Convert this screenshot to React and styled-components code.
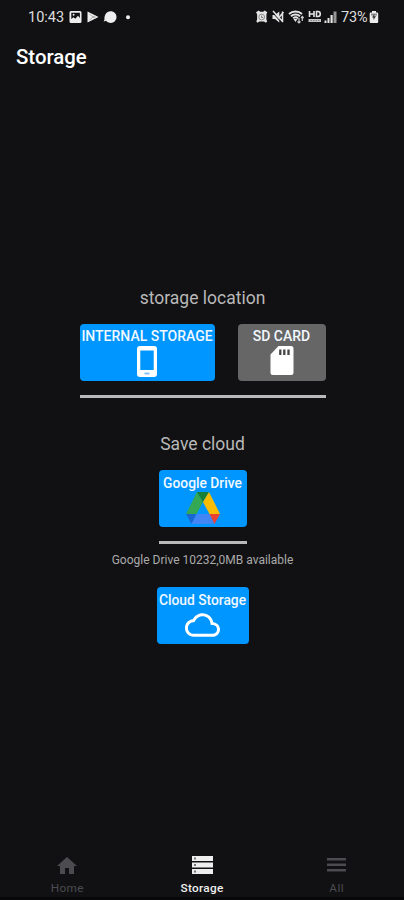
import React from 'react';
import styled, { createGlobalStyle } from 'styled-components';

const blue = '#0096ff';

//status bar drawings
const StatusLeftIcons = () => (
  <svg width="72" height="16" viewBox="0 0 72 16" fill="#eee">
    <path fillRule="evenodd" d="M3 2h9a1.500 1.500 0 0 1 1.500 1.500v9a1.500 1.500 0 0 1-1.500 1.500h-9a1.500 1.500 0 0 1-1.500-1.500v-9A1.500 1.500 0 0 1 3 2zM3.300 3.800v6.200l2.200-1.700 1.800 1.400 2.700-3 1.900 2.300V3.800z" />
    <circle cx="5.600" cy="5.800" r="1" />
    <path d="M19.500 2.500l11 5.500-11 5.500z" />
    <path d="M21.500 5l3.500 3-3.500 3M25 8l3-1.500M25 8l3 1.500" fill="none" stroke="#99999b" strokeWidth=".8" />
    <path d="M36.500 10.500c-.5-5 2.500-8.300 6.200-8.300 3.300 0 5.800 2.600 5.800 5.800s-2.500 5.900-5.800 5.900c-2 0-3.500-.8-4.600-2.100l-2.500.6z" />
    <circle cx="60" cy="8.300" r="2" />
  </svg>
);

const StatusRightIcons = () => (
  <svg width="82" height="16" viewBox="0 0 82 16" fill="#e4e4e4">
    <path d="M1 3.200l2.700-1.700 1.500 1.300h3l1.500-1.300 2.600 1.700-.9 2v5.300l.8 1.900-1.400 1.400-1.700-1.200H4.300l-1.600 1.200-1.400-1.400.8-1.900V5.200z" />
    <circle cx="6.700" cy="8" r="2.900" fill="none" stroke="#777" strokeWidth=".8" />
    <path d="M6.600 6.500v2h1.500" fill="none" stroke="#666" strokeWidth=".8" />
    <path d="M17.500 6H20l4.300-3.500v11L20 10h-2.500z" />
    <path d="M17.500 3.500l9 10" stroke="#111" strokeWidth="1" />
    <path d="M18 2l10 11M27.500 2.500v10M24.500 8l4-5" stroke="#e4e4e4" strokeWidth="1.500" fill="none" />
    <path d="M34 5c3.500-3.300 9.500-3.300 13 0M36 7.200c2.500-2.300 6.500-2.300 9 0M38.200 9.300c1.500-1.300 3.500-1.300 4.800 0" fill="none" stroke="#e4e4e4" strokeWidth="1.900" />
    <path d="M40.500 13l-2-3h4z" />
    <path d="M44 9v5M42.500 12.500l1.500 1.500 1.500-1.500M47.300 12V7.500M46 9l1.300-1.500L48.600 9" fill="none" stroke="#ccc" strokeWidth="1.200" />
    <path d="M54.500 2v6M59 2v6M54.500 5H59M61.500 2.500v5H63c3 0 3-5 0-5z" fill="none" stroke="#e4e4e4" strokeWidth="1.600" />
    <path d="M53.500 10h12.500v3H53.500z" fill="#c4c4c4" />
    <path d="M55.500 11.500h9" stroke="#777" strokeWidth=".8" strokeDasharray="1.500 1" />
    <path d="M69.500 11.500h2V14h-2zM72.500 9h2v5h-2zM75.500 6h2.200v8h-2.200z" />
    <path d="M78.500 2.500h3V14h-3z" fill="#959595" />
  </svg>
);

const BatteryIcon = () => (
  <svg width="10" height="16" viewBox="0 0 10 16" fill="#ededed">
    <path d="M3 2h4v1.500h1.200a1 1 0 0 1 1 1V13a1 1 0 0 1-1 1H1.700a1 1 0 0 1-1-1V4.500a1 1 0 0 1 1-1H3z" />
    <path d="M2 4.500h6v2H2z" fill="#8b8b8b" />
    <path d="M5.300 5L3 8.500h1.500V11L7 7.300H5.300z" fill="#333" />
  </svg>
);

//button drawings
const PhoneIcon = () => (
  <svg width="20" height="31" viewBox="0 0 20 31">
    <path fill="#fff" fillRule="evenodd" d="M3 0h14a3 3 0 0 1 3 3v25a3 3 0 0 1-3 3H3a3 3 0 0 1-3-3V3a3 3 0 0 1 3-3zM3.300 4.500V24h13.400V4.500z" />
    <path d="M7.500 27.500h5" stroke="#7fbdf0" strokeWidth="1.800" />
  </svg>
);

const SdCardIcon = () => (
  <svg width="24" height="30" viewBox="0 0 24 30">
    <path fill="#fff" d="M8.500 0H21a2.500 2.500 0 0 1 2.500 2.500v24A2.500 2.500 0 0 1 21 29H3a2.500 2.500 0 0 1-2.500-2.500V8.500z" />
    <path d="M10.300 3.500v5.500M14.300 3.500v5.500M18.500 3.500v5.500" stroke="#444" strokeWidth="2.300" />
  </svg>
);

const DriveIcon = () => (
  <svg width="34" height="32" viewBox="0 0 34 32">
    <path fill="#34a853" d="M11 0l6 10-6.500 12H0z" />
    <path fill="#188038" d="M11 0h12l-6 10z" />
    <path fill="#fbbc04" d="M23 0l11 22H23.500L17 10z" />
    <path fill="#1967d2" d="M0 22h10.500L5.500 32z" />
    <path fill="#4285f4" d="M10.500 22h13l5 10h-23z" />
    <path fill="#ea4335" d="M23.500 22H34l-5.500 10z" />
  </svg>
);

const CloudIcon = () => (
  <svg width="35" height="24" viewBox="0 0 24 16">
    <path fill="#fff" d="M12 2c2.620 0 4.880 1.860 5.390 4.430l.3 1.500 1.530.11c1.560.1 2.780 1.410 2.780 2.960 0 1.650-1.350 3-3 3H6c-2.210 0-4-1.790-4-4 0-2.050 1.530-3.760 3.560-3.970l1.070-.11.5-.95C8.080 3.140 9.940 2 12 2m0-2C9.110 0 6.600 1.640 5.350 4.040 2.340 4.360 0 6.910 0 10c0 3.310 2.690 6 6 6h13c2.760 0 5-2.240 5-5 0-2.640-2.050-4.780-4.650-4.960C18.670 2.590 15.640 0 12 0z" />
  </svg>
);

//nav drawings
const HomeIcon = () => (
  <svg width="20" height="17" viewBox="0 0 20 17" fill="currentColor">
    <path d="M8 17v-6h4v6h5V9h3L10 0 0 9h3v8z" />
  </svg>
);

const StorageIcon = () => (
  <svg width="21" height="18" viewBox="0 0 21 18">
    <path fill="#eee" d="M0 0h21v5H0zM0 6.500h21v5H0zM0 13h21v5H0z" />
    <path fill="#777" d="M2 1.500h2v2H2zM2 8h2v2H2zM2 14.500h2v2H2z" />
  </svg>
);

const MenuIcon = () => (
  <svg width="19" height="14" viewBox="0 0 19 14" fill="currentColor">
    <path d="M0 0h19v2.500H0zM0 5.500h19V8H0zM0 11h19v2.500H0z" />
  </svg>
);

const App = () => (
  <>
    <GlobalStyle />
    <Screen>
      <StatusBar>
        <StatusGroup>
          <Clock>10:43</Clock>
          <StatusLeftIcons />
        </StatusGroup>
        <StatusGroup>
          <StatusRightIcons />
          <Percent>73%</Percent>
          <BatteryIcon />
        </StatusGroup>
      </StatusBar>

      <Title>Storage</Title>

      <Content>
        <SectionTitle>storage location</SectionTitle>
        <ButtonRow>
          <StorageButton $width={135}>
            <ButtonLabel>INTERNAL STORAGE</ButtonLabel>
            <PhoneIcon />
          </StorageButton>
          <StorageButton $width={88} $color="#666">
            <ButtonLabel>SD CARD</ButtonLabel>
            <SdCardIcon />
          </StorageButton>
        </ButtonRow>
        <Divider $width={246} />

        <CloudTitle>Save cloud</CloudTitle>
        <StorageButton $width={88} $top={5}>
          <ButtonLabel $size={13.8} $gap={1}>Google Drive</ButtonLabel>
          <DriveIcon />
        </StorageButton>
        <Divider $width={88} />
        <Available>Google Drive 10232,0MB available</Available>

        <StorageButton $width={92} $top={5}>
          <ButtonLabel $size={13.8} $gap={5}>Cloud Storage</ButtonLabel>
          <CloudIcon />
        </StorageButton>
      </Content>

      <BottomNav>
        <NavItem>
          <HomeIcon />
          <NavLabel $spacing="0.3px">Home</NavLabel>
        </NavItem>
        <NavItem $active>
          <StorageIcon />
          <NavLabel $spacing="0.3px">Storage</NavLabel>
        </NavItem>
        <NavItem>
          <MenuIcon />
          <NavLabel $spacing="0.5px">All</NavLabel>
        </NavItem>
      </BottomNav>
    </Screen>
  </>
);

//CSS Styled-components
const GlobalStyle = createGlobalStyle`
  * {
    box-sizing: border-box;
  }
  body {
    margin: 0;
    background: #111113;
  }
  svg {
    display: block;
    flex-shrink: 0;
  }
`;

const Screen = styled.div`
  width: 404px;
  height: 900px;
  display: flex;
  flex-direction: column;
  background: #111113;
  border-bottom: #08080a solid 3px;
  color: #fff;
  font-family: Roboto, sans-serif;
  white-space: nowrap;
`;

const StatusBar = styled.div`
  height: 34px;
  padding: 0 25px 0 28px;
  display: flex;
  justify-content: space-between;
  align-items: center;
`;

const StatusGroup = styled.div`
  display: flex;
  align-items: center;
`;

const Clock = styled.span`
  width: 40px;
  padding-top: 1px;
  font-size: 14.5px;
  line-height: 15px;
  color: #ddd;
`;

const Percent = styled(Clock)`
  width: 28px;
  margin-left: 4px;
  letter-spacing: -0.2px;
`;

const Title = styled.h1`
  margin: 0;
  padding: 11px 16px 0;
  font-size: 20.4px;
  line-height: 24px;
  font-weight: 500;
`;

const Content = styled.main`
  flex: 1;
  padding: 218px 0 0 1px;
  display: flex;
  flex-direction: column;
  align-items: center;
`;

const SectionTitle = styled.h2`
  margin: 0 0 15px;
  font-size: 17.5px;
  line-height: 22px;
  font-weight: 400;
  color: #b9b9b9;
`;

const CloudTitle = styled(SectionTitle)`
  margin-top: 35px;
`;

const ButtonRow = styled.div`
  display: flex;
  gap: 23px;
`;

const StorageButton = styled.button`
  width: ${props => props.$width}px;
  height: 57px;
  padding: ${props => props.$top || 4}px 0 0;
  display: flex;
  flex-direction: column;
  align-items: center;
  border: 0;
  border-radius: 4px;
  background: ${props => props.$color || blue};
  color: #f2f8ff;
  font-family: inherit;
`;

const ButtonLabel = styled.span`
  font-size: ${props => props.$size || 14}px;
  line-height: 16px;
  font-weight: 500;
  margin-bottom: ${props => props.$gap || 2}px;
`;

const Divider = styled.div`
  width: ${props => props.$width}px;
  height: 3px;
  margin-top: 14px;
  background: #b9b9b9;
`;

const Available = styled.p`
  margin: 8px 0 19px;
  font-size: 12px;
  line-height: 16px;
  color: #aaa;
`;

const BottomNav = styled.nav`
  height: 50px;
  padding-bottom: 3px;
  display: flex;
`;

const NavItem = styled.div`
  flex: 1;
  display: grid;
  grid-template-rows: 36px 14px;
  place-items: center;
  color: ${props => props.$active ? '#eee' : '#4b4b50'};
  font-weight: ${props => props.$active ? 500 : 400};
`;

const NavLabel = styled.span`
  margin-top: -4px;
  font-size: 11.8px;
  line-height: 14px;
  letter-spacing: ${props => props.$spacing || 0};
`;

export default App;
